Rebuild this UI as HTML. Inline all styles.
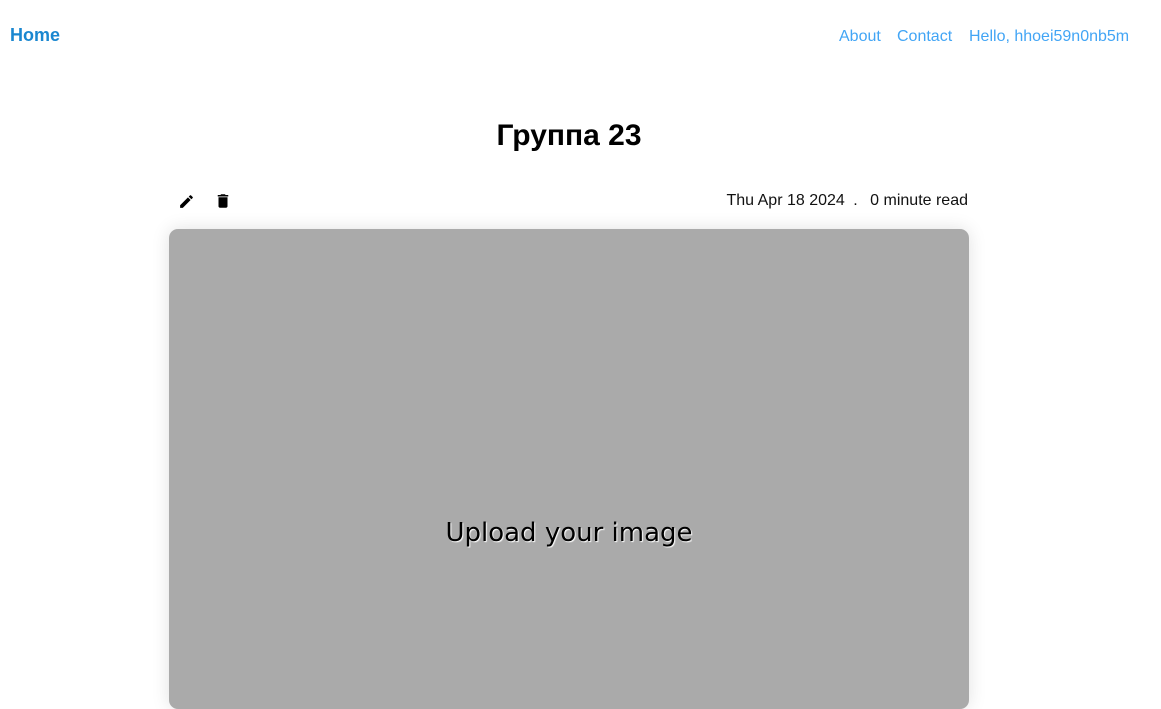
<!DOCTYPE html>
<html><head><meta charset="utf-8"><style>
body{margin:0;width:1161px;height:695px;overflow:hidden;background:#fff;font-family:"Liberation Sans",sans-serif;}
.home{position:absolute;left:10px;top:25px;font-size:18px;font-weight:bold;color:#1a87d0;}
.nav{position:absolute;top:28px;font-size:16px;color:#42a5f5;}
h1{position:absolute;left:0;width:1138px;top:119px;margin:0;text-align:center;font-size:30px;font-weight:bold;color:#000;}
.meta{position:absolute;right:193px;top:192px;font-size:16px;color:#111;}
.card{position:absolute;left:169px;top:229px;width:800px;height:480px;background:#aaa;border-radius:9px;box-shadow:0 0 18px rgba(0,0,0,0.12);}
.up{position:absolute;left:0;right:0;top:289px;text-align:center;font-family:"DejaVu Sans",sans-serif;font-size:26px;color:#000;text-shadow:1px 1px 1px #fff;}
</style></head><body>
<div class="home">Home</div>
<div class="nav" style="left:839px">About</div>
<div class="nav" style="left:897px">Contact</div>
<div class="nav" style="left:969px">Hello, hhoei59n0nb5m</div>
<h1>Группа 23</h1>
<svg style="position:absolute;left:178px;top:193px" width="17" height="17" viewBox="0 0 24 24"><path d="M3 17.25V21h3.75L17.81 9.94l-3.75-3.75L3 17.25zM20.71 7.04a1 1 0 000-1.41l-2.34-2.34a1 1 0 00-1.41 0l-1.830 1.83 3.75 3.75 1.83-1.83z"/></svg>
<svg style="position:absolute;left:214px;top:192px" width="18" height="18" viewBox="0 0 24 24"><path d="M6 19c0 1.1.9 2 2 2h8c1.1 0 2-.9 2-2V7H6v12zM19 4h-3.5l-1-1h-5l-1 1H5v2h14V4z"/></svg>
<div class="meta">Thu Apr 18 2024 <span style="margin:0 8px 0 4px">.</span> 0 minute read</div>
<div class="card"><div class="up">Upload your image</div></div>
</body></html>
